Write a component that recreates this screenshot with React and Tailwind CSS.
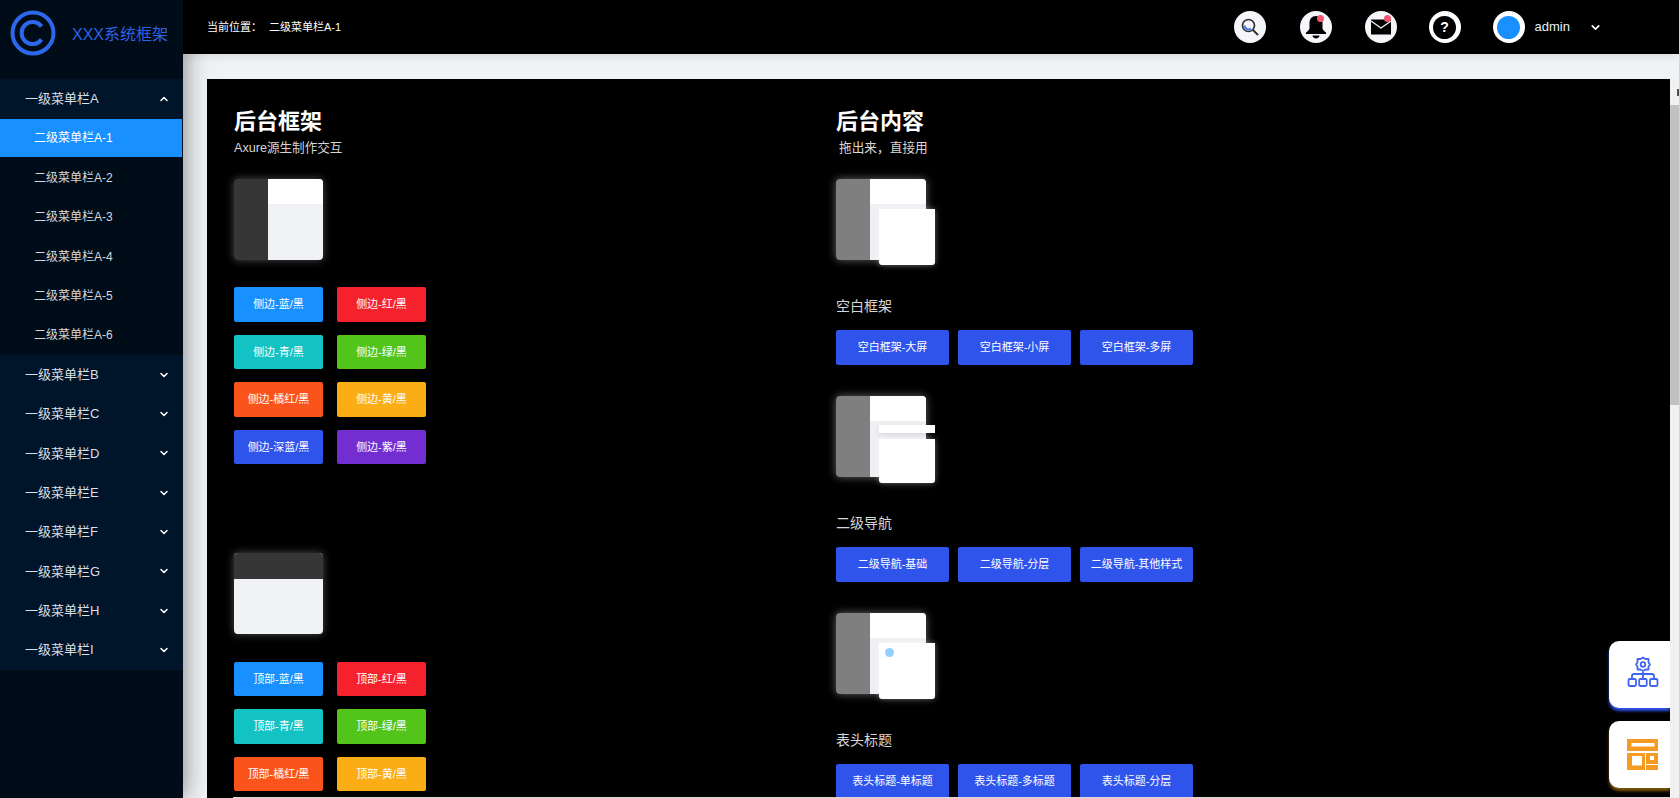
import { ChevronDown, ChevronUp } from "lucide-react";

const subMenus = ["二级菜单栏A-1", "二级菜单栏A-2", "二级菜单栏A-3", "二级菜单栏A-4", "二级菜单栏A-5", "二级菜单栏A-6"];
const menus = ["B", "C", "D", "E", "F", "G", "H", "I"];

const sideButtons = [
  ["侧边-蓝/黑", "bg-[#1890ff]"],
  ["侧边-红/黑", "bg-[#f5222d]"],
  ["侧边-青/黑", "bg-[#13c2c2]"],
  ["侧边-绿/黑", "bg-[#52c41a]"],
  ["侧边-橘红/黑", "bg-[#fa541c]"],
  ["侧边-黄/黑", "bg-[#faad14]"],
  ["侧边-深蓝/黑", "bg-[#2f54eb]"],
  ["侧边-紫/黑", "bg-[#722ed1]"],
];

const topButtons = [
  ["顶部-蓝/黑", "bg-[#1890ff]"],
  ["顶部-红/黑", "bg-[#f5222d]"],
  ["顶部-青/黑", "bg-[#13c2c2]"],
  ["顶部-绿/黑", "bg-[#52c41a]"],
  ["顶部-橘红/黑", "bg-[#fa541c]"],
  ["顶部-黄/黑", "bg-[#faad14]"],
];

const blocks = [
  { label: "空白框架", variant: "blank", buttons: ["空白框架-大屏", "空白框架-小屏", "空白框架-多屏"] },
  { label: "二级导航", variant: "nav", buttons: ["二级导航-基础", "二级导航-分层", "二级导航-其他样式"] },
  { label: "表头标题", variant: "title", buttons: ["表头标题-单标题", "表头标题-多标题", "表头标题-分层"] },
];

const Logo = () => (
  <svg width="46" height="46" viewBox="0 0 46 46" fill="none" stroke="#2d68ec">
    <circle cx="23" cy="23" r="20.5" strokeWidth="4" />
    <path d="M31.5 16.5a11 11 0 1 0 0 13" strokeWidth="4" />
  </svg>
);

const SearchIcon = () => (
  <svg width="20" height="20" viewBox="0 0 20 20" fill="none">
    <circle cx="8.5" cy="8.5" r="6" stroke="#33302e" strokeWidth="1.7" />
    <path d="M4.5 8.5a4 4 0 0 0 6.5 3" stroke="#3f7cf0" strokeWidth="2" />
    <path d="M13 13l5 5" stroke="#33302e" strokeWidth="2" />
  </svg>
);

const BellIcon = () => (
  <svg width="22" height="24" viewBox="0 0 22 24" fill="#000">
    <path d="M11 1c-4.200 0-6.500 3-6.500 7v5c0 1.700-1.500 3-3.500 4.500v1.500h20v-1.500c-2-1.500-3.500-2.800-3.500-4.500v-5c0-4-2.300-7-6.500-7z" />
    <path d="M7.500 20.500h7c0 1.600-1.500 3-3.500 3s-3.500-1.400-3.500-3z" />
  </svg>
);

const MailIcon = () => (
  <svg width="20" height="16" viewBox="0 0 20 16">
    <rect x="0" y="0.500" width="20" height="15" fill="#000" />
    <path d="M0 2l10 7 10-7" fill="none" stroke="#f5f6fa" strokeWidth="1.200" />
  </svg>
);

const OrgIcon = () => (
  <svg width="32" height="32" viewBox="0 0 32 32" fill="none" stroke="#3f64f0" strokeWidth="1.800">
    <path d="M16 1.500l2.500 1.500h3v3.500l1.500 2-1.500 2v3h-3l-2.500 1.500-2.500-1.500h-3v-3l-1.500-2 1.500-2v-3.500h3z" strokeLinejoin="round" />
    <circle cx="16" cy="8.500" r="2.300" />
    <path d="M5 23v-3a2 2 0 0 1 2-2h18a2 2 0 0 1 2 2v3M16 16v7" />
    <rect x="1.500" y="23" width="7.500" height="7" rx="1.200" />
    <rect x="12.200" y="23" width="7.500" height="7" rx="1.200" />
    <rect x="23" y="23" width="7.500" height="7" rx="1.200" />
  </svg>
);

const LayoutIcon = () => (
  <svg width="31" height="31" viewBox="0 0 31 31">
    <rect x="0" y="0" width="31" height="12" fill="#f59b23" />
    <rect x="4.500" y="4" width="23" height="3.500" fill="#fff" />
    <rect x="0" y="14" width="18" height="17" fill="#f59b23" />
    <rect x="5" y="17" width="10" height="9.500" fill="#fff" />
    <rect x="19" y="14" width="12" height="11" fill="#f59b23" />
    <rect x="23" y="17" width="4" height="4" fill="#fff" />
    <rect x="19" y="26" width="12" height="5" fill="#f59b23" />
  </svg>
);

const RoundIcon = ({ children, dotClass }) => (
  <div className="relative flex h-8 w-8 items-center justify-center rounded-full bg-[#f5f6fa]">
    {children}
    {dotClass && <span className={`absolute h-[7px] w-[7px] rounded-full bg-[#f5586e] ${dotClass}`} />}
  </div>
);

const SideThumb = () => (
  <div className="flex h-[81px] w-[89px] overflow-hidden rounded-[4px] shadow-[0_0_8px_rgba(255,255,255,0.3)]">
    <div className="w-[34px] bg-[#363636]" />
    <div className="flex-1 bg-[#f0f2f5]">
      <div className="h-[25px] bg-white" />
    </div>
  </div>
);

const TopThumb = () => (
  <div className="h-[81px] w-[89px] overflow-hidden rounded-[4px] bg-[#f0f2f5] shadow-[0_0_8px_rgba(255,255,255,0.3)]">
    <div className="h-[26px] bg-[#363636]" />
  </div>
);

const ContentThumb = ({ variant }) => (
  <div className="relative h-[81px] w-[90px]">
    <div className="flex h-full w-full overflow-hidden rounded-[4px] shadow-[0_0_8px_rgba(255,255,255,0.4)]">
      <div className="w-[34px] bg-[#7f7f7f]" />
      <div className="flex-1 bg-[#eef0f4]">
        <div className="h-[25px] bg-white" />
      </div>
    </div>
    {variant === "nav" ? (
      <>
        <div className="absolute left-[43px] top-[29px] h-[8px] w-[56px] bg-white shadow-[0_2px_6px_rgba(0,0,0,0.1)]" />
        <div className="absolute left-[43px] top-[43px] h-[44px] w-[56px] rounded-b-[3px] bg-white shadow-[0_0_6px_rgba(255,255,255,0.4)]" />
      </>
    ) : (
      <div className="absolute left-[43px] top-[30px] h-[56px] w-[56px] rounded-b-[3px] bg-white shadow-[0_0_6px_rgba(255,255,255,0.4)]">
        {variant === "title" && <span className="absolute left-[6px] top-[5px] h-[9px] w-[9px] rounded-full bg-[#91d0ff]" />}
      </div>
    )}
  </div>
);

const ColorButtons = ({ items }) => (
  <div className="grid w-fit grid-cols-[89px_89px] gap-x-[14px] gap-y-[13px]">
    {items.map(([text, color]) => (
      <button key={text} className={`flex h-[34.5px] items-center justify-center rounded-[2px] text-[11px] text-white ${color}`}>
        {text}
      </button>
    ))}
  </div>
);

export default function App() {
  return (
    <div
      className="flex h-[798px] w-[1679px] overflow-hidden bg-[#f0f2f5]"
      style={{ fontFamily: '"Liberation Sans", "Noto Sans CJK SC", sans-serif' }}
    >
      {/* Sidebar */}
      <aside className="relative z-10 flex w-[183px] shrink-0 flex-col bg-[#000c17] shadow-[0_0_24px_rgba(0,0,0,0.5)]">
        <div className="flex h-[79px] items-start pl-[10px] pt-[10px]">
          <Logo />
          <span className="ml-[16px] mt-[15px] text-[16px] leading-[20px] text-[#2f62e6]">XXX系统框架</span>
        </div>

        <div className="flex h-[40px] items-center justify-between bg-[#001529] pl-[25px] pr-[13px] text-[13px] text-[#dcdfe3]">
          一级菜单栏A
          <ChevronUp size={12} strokeWidth={3} className="text-white" />
        </div>
        <div className="grid h-[236px] grid-rows-6">
          {subMenus.map((item, i) =>
            i === 0 ? (
              <div key={item} className="flex h-[38px] w-[182px] items-center bg-[#1890ff] pl-[34px] text-[12px] text-white">
                {item}
              </div>
            ) : (
              <div key={item} className="flex items-center pl-[34px] text-[12px] text-[#d5d8dc]">
                {item}
              </div>
            )
          )}
        </div>
        <div className="bg-[#001529]">
          {menus.map((m) => (
            <div key={m} className="flex h-[39.33px] items-center justify-between pl-[25px] pr-[13px] text-[13px] text-[#dcdfe3]">
              一级菜单栏{m}
              <ChevronDown size={12} strokeWidth={3} className="text-white" />
            </div>
          ))}
        </div>
      </aside>

      <div className="flex min-w-0 flex-1 flex-col">
        {/* Header */}
        <header className="relative z-[5] flex h-[54px] shrink-0 items-center justify-between bg-black pl-[24px] pr-[77px] shadow-[0_2px_10px_rgba(0,0,0,0.1)]">
          <div className="flex items-center">
            <span className="text-[11px] text-white">当前位置：</span>
            <span className="ml-[7px] text-[11px] text-white">二级菜单栏A-1</span>
          </div>
          <div className="flex items-center">
            <RoundIcon><SearchIcon /></RoundIcon>
            <div className="ml-[34px]"><RoundIcon dotClass="right-[8px] top-[4px]"><BellIcon /></RoundIcon></div>
            <div className="ml-[33px]"><RoundIcon dotClass="right-[6px] top-[4px]"><MailIcon /></RoundIcon></div>
            <div className="ml-[32px] flex h-8 w-8 items-center justify-center rounded-full bg-white">
              <div className="flex h-[23px] w-[23px] items-center justify-center rounded-full bg-black text-[14px] font-semibold text-white">?</div>
            </div>
            <div className="ml-[32px] flex h-8 w-8 items-center justify-center rounded-full bg-white">
              <div className="h-[23px] w-[23px] rounded-full bg-[#1890ff]" />
            </div>
            <span className="ml-[10px] text-[13px] text-[#e6f2ff]">admin</span>
            <ChevronDown size={13} strokeWidth={3} className="ml-[19px] text-white" />
          </div>
        </header>

        {/* Main */}
        <main className="relative flex min-h-0 flex-1 pl-[24px] pt-[25px]">
          <div className="relative flex min-w-0 flex-1 overflow-hidden bg-black pl-[27px] pt-[28px]">
            <section className="w-[602px] shrink-0">
              <h2 className="text-[22px] font-bold leading-[30px] text-white">后台框架</h2>
              <p className="mt-[1px] text-[12.6px] leading-[20px] text-[#d7d7d7]">Axure源生制作交互</p>
              <div className="mt-[21px]"><SideThumb /></div>
              <div className="mt-[27px]"><ColorButtons items={sideButtons} /></div>
              <div className="mt-[88.5px]"><TopThumb /></div>
              <div className="mt-[28px]"><ColorButtons items={topButtons} /></div>
            </section>
            <section className="flex-1">
              <h2 className="text-[22px] font-bold leading-[30px] text-white">后台内容</h2>
              <p className="mt-[1px] pl-[3px] text-[12.7px] leading-[20px] text-[#d7d7d7]">拖出来，直接用</p>
              <div className="mt-[21px]">
                {blocks.map((b) => (
                  <div key={b.label} className="mb-[31px]">
                    <ContentThumb variant={b.variant} />
                    <p className="mt-[36px] text-[14px] leading-[20px] text-[#d7d7d7]">{b.label}</p>
                    <div className="mt-[14px] flex gap-[9px]">
                      {b.buttons.map((t) => (
                        <button key={t} className="flex h-[35px] w-[113px] items-center justify-center rounded-[2px] bg-[#2f54eb] text-[11px] text-white">
                          {t}
                        </button>
                      ))}
                    </div>
                  </div>
                ))}
              </div>
            </section>
            <div className="absolute bottom-0 left-[26px] right-0 h-px bg-[#d9d9d9]" />

            {/* Floating tabs */}
            <div className="absolute right-0 top-[562px] flex h-[67px] w-[61px] items-center justify-center rounded-l-[10px] bg-white pb-[5px] pl-[7px] shadow-[0_3px_3px_#2f54eb]">
              <OrgIcon />
            </div>
            <div className="absolute right-0 top-[642px] flex h-[67px] w-[61px] items-center justify-center rounded-l-[10px] bg-white pl-[6px] shadow-[0_3px_3px_rgba(250,173,20,0.5)]">
              <LayoutIcon />
            </div>
          </div>

          {/* Scrollbar */}
          <div className="flex w-[9px] shrink-0 flex-col overflow-hidden bg-[#f1f1f1]">
            <div className="flex h-[26px] items-center pl-[7px] pt-[1px]">
              <span className="h-[7px] w-[4px] shrink-0 bg-[#505050]" />
            </div>
            <div className="h-[300px] bg-[#c1c1c1]" />
          </div>
        </main>
      </div>
    </div>
  );
}
